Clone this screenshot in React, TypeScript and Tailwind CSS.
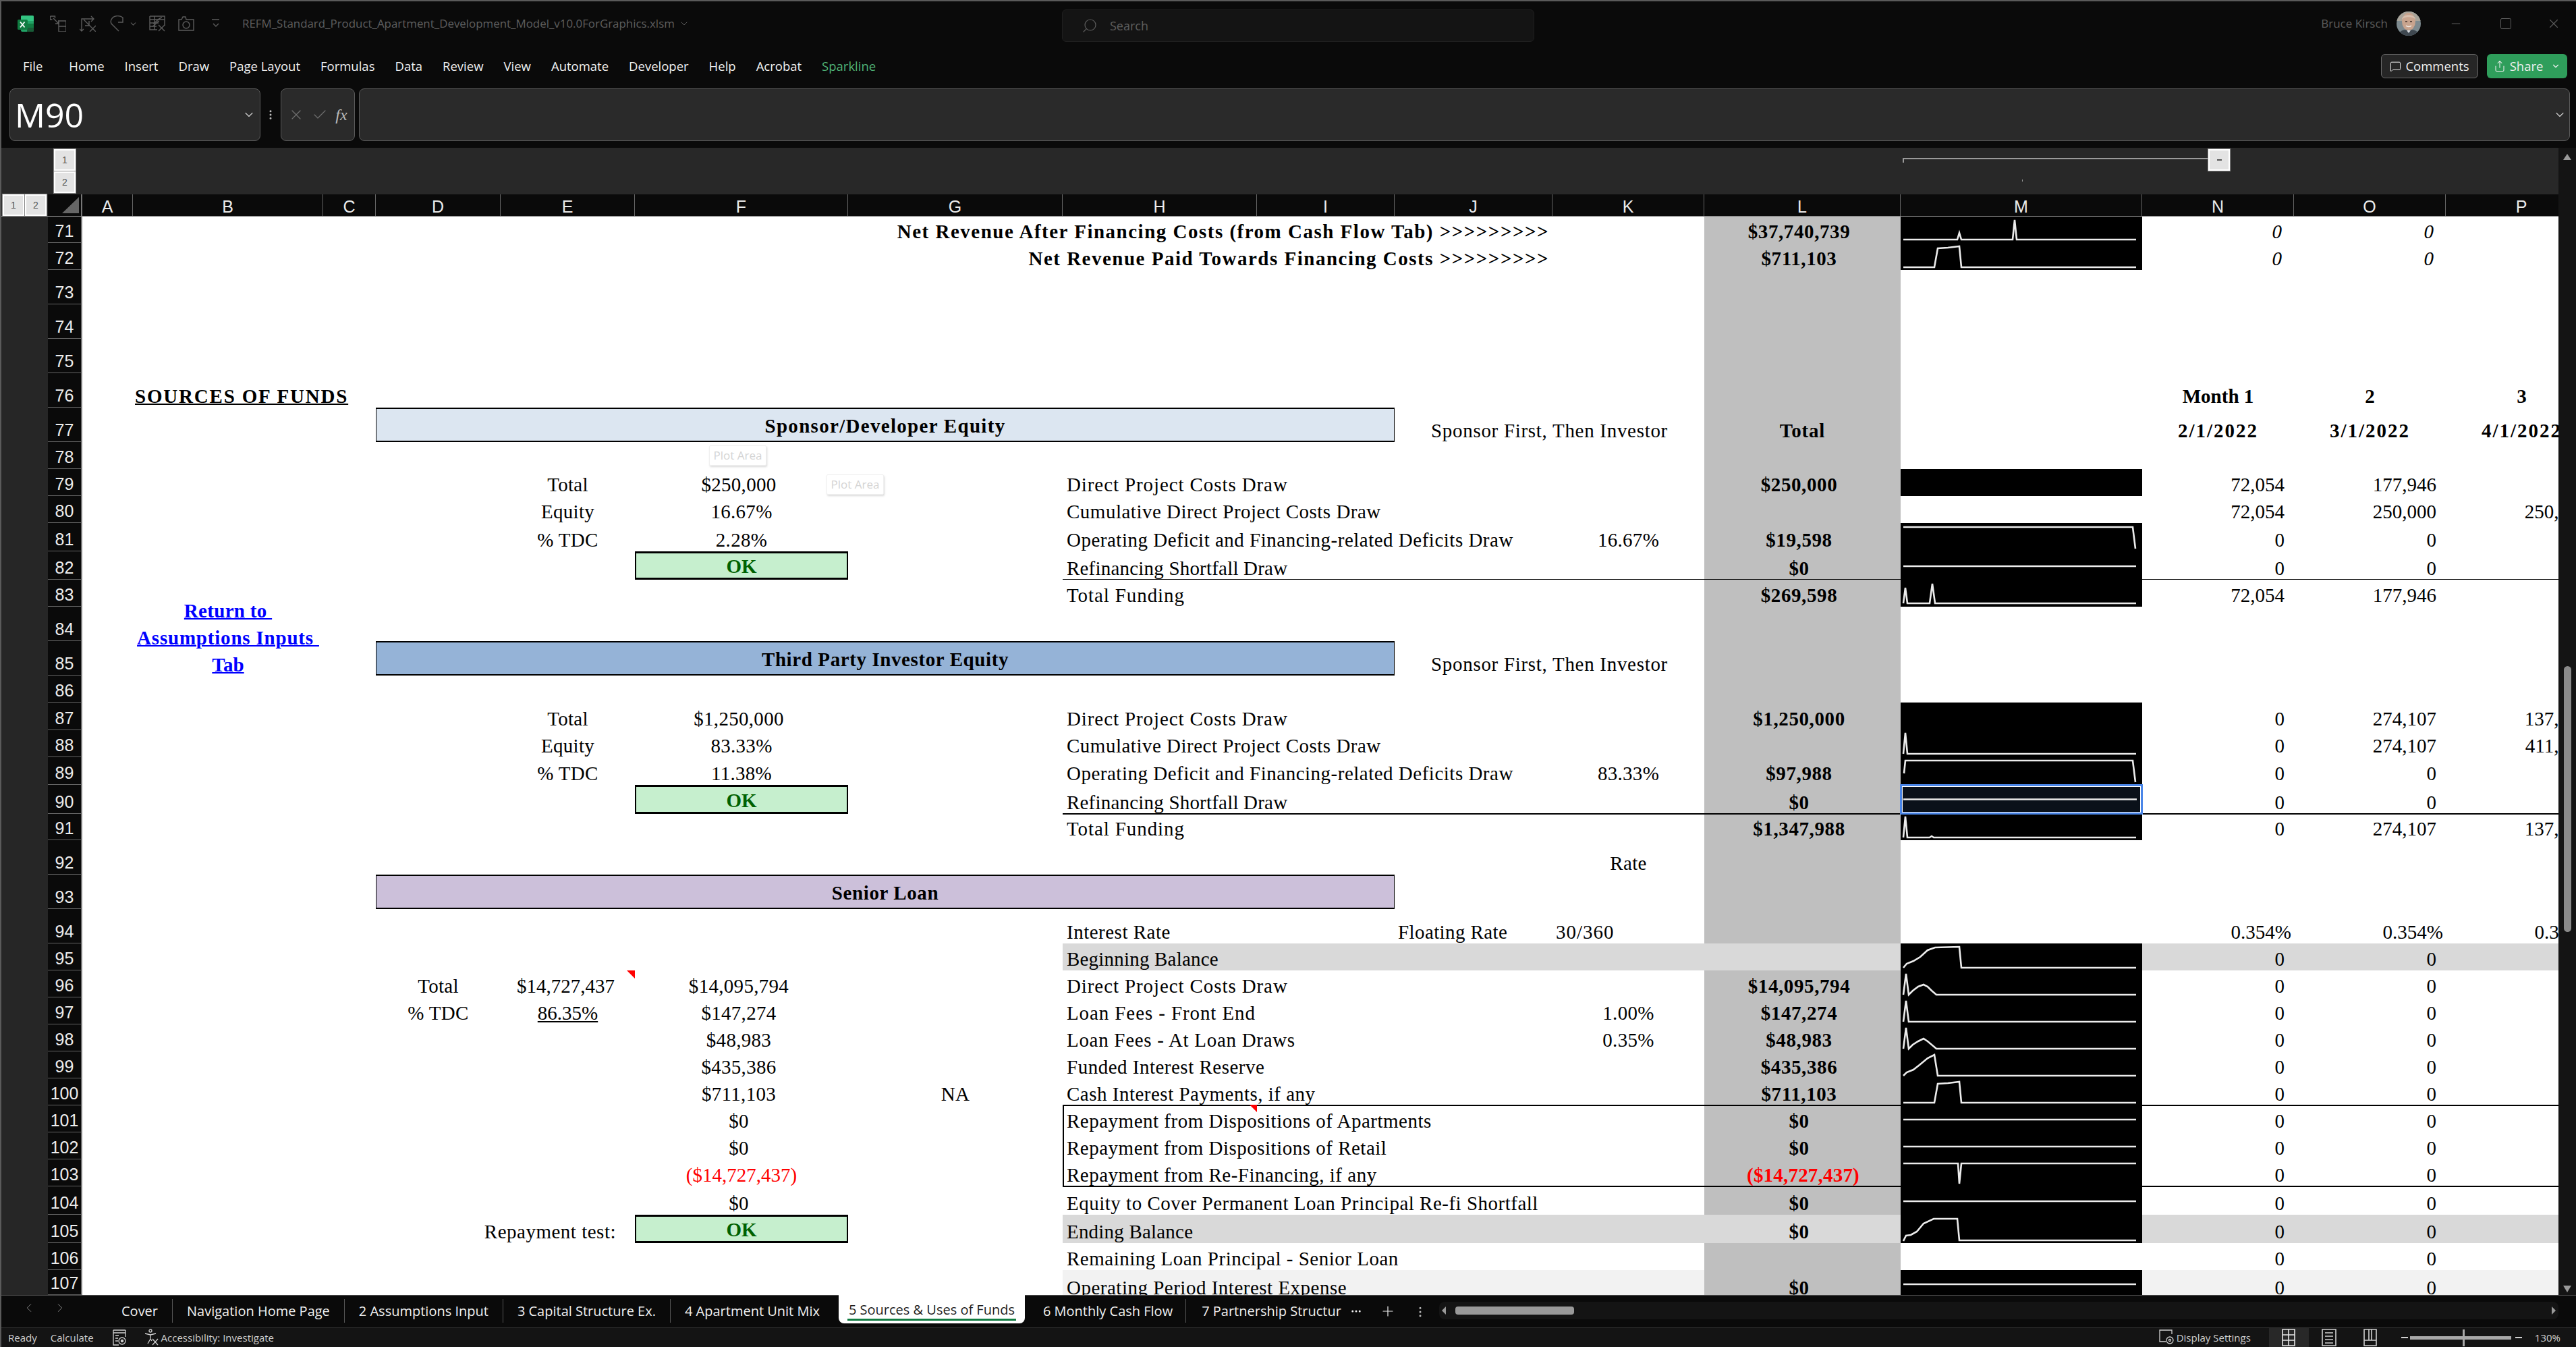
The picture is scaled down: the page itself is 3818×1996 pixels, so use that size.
import React from "react";
import { ChevronDown, ChevronLeft, ChevronRight, Check, X, Minus, Plus, Search, Square, MessageSquare, Share, MoreVertical, MoreHorizontal } from "lucide-react";

const GRID_COLS = "grid-cols-[75px_282px_78px_185px_199px_316px_318px_288px_204px_234px_225px_291px_358px_225px_225px_225px]";
const GRID_ROWS = "grid-rows-[39px_40px_51px_51px_51px_51px_51px_40px_40px_40px_42px_42px_40px_51px_51px_40px_41px_40px_41px_43px_39px_51px_51px_51px_40px_40px_40px_40px_40px_40px_40px_40px_40px_42px_42px_40px_37px]";

const rowHeights = [39, 40, 51, 51, 51, 51, 51, 40, 40, 40, 42, 42, 40, 51, 51, 40, 41, 40, 41, 43, 39, 51, 51, 51, 40, 40, 40, 40, 40, 40, 40, 40, 40, 42, 42, 40, 37];
const colNames = ["A", "B", "C", "D", "E", "F", "G", "H", "I", "J", "K", "L", "M", "N", "O", "P"];

const D = 4, E = 5, F = 6, G = 7, H = 8, J = 10, K = 11, L = 12, N = 14, O = 15, P = 16, B_ = 2;

const CTR = "justify-center tracking-[0.3px]";
const LFT = "justify-start pl-[6px] tracking-[0.5px]";
const LFW = "justify-start pl-[6px] tracking-[0.9px]";
const LFN = "justify-start pl-[6px] tracking-[0.2px]";
const NUM = "justify-end pr-[14px]";
const ITA = "justify-end pr-[18px] italic";
const CUR = "justify-center pr-[8px] tracking-[0.3px]";
const TOT = "justify-center pr-[10px] font-bold tracking-[0.6px]";
const REDT = "justify-center pl-[2px] font-bold tracking-[0.2px] text-[#ff0000]";
const NET = "justify-end pr-[5px] font-bold tracking-[1.5px]";
const DAT = "justify-center font-bold tracking-[2px]";
const SFI = "justify-start pl-[54px] tracking-[0.7px]";

type Cell = [number, number, string, string];

const threeNums = (n: number, a: string, b: string, c?: string): Cell[] => {
  const out: Cell[] = [[N, n, a, NUM], [O, n, b, NUM]];
  if (c) out.push([P, n, c, NUM]);
  return out;
};

const cells: Cell[] = [
  [J, 71, "Net Revenue After Financing Costs (from Cash Flow Tab) >>>>>>>>>", NET],
  [L, 71, "$37,740,739", TOT],
  [N, 71, "0", ITA],
  [O, 71, "0", ITA],
  [J, 72, "Net Revenue Paid Towards Financing Costs >>>>>>>>>", NET],
  [L, 72, "$711,103", TOT],
  [N, 72, "0", ITA],
  [O, 72, "0", ITA],
  [N, 76, "Month 1", "justify-center font-bold"],
  [O, 76, "2", "justify-center font-bold"],
  [P, 76, "3", "justify-center font-bold"],
  [J, 77, "Sponsor First, Then Investor", SFI],
  [L, 77, "Total", "justify-center font-bold tracking-[0.8px]"],
  [N, 77, "2/1/2022", DAT],
  [O, 77, "3/1/2022", DAT],
  [P, 77, "4/1/2022", DAT],

  [E, 79, "Total", CTR],
  [F, 79, "$250,000", CUR],
  [H, 79, "Direct Project Costs Draw", LFW],
  [L, 79, "$250,000", TOT],
  ...threeNums(79, "72,054", "177,946"),
  [E, 80, "Equity", CTR],
  [F, 80, "16.67%", CTR],
  [H, 80, "Cumulative Direct Project Costs Draw", LFT],
  ...threeNums(80, "72,054", "250,000", "250,000"),
  [E, 81, "% TDC", CTR],
  [F, 81, "2.28%", CTR],
  [H, 81, "Operating Deficit and Financing-related Deficits Draw", LFT],
  [K, 81, "16.67%", CTR],
  [L, 81, "$19,598", TOT],
  ...threeNums(81, "0", "0"),
  [H, 82, "Refinancing Shortfall Draw", LFN],
  [L, 82, "$0", TOT],
  ...threeNums(82, "0", "0"),
  [H, 83, "Total Funding", LFW],
  [L, 83, "$269,598", TOT],
  ...threeNums(83, "72,054", "177,946"),

  [J, 85, "Sponsor First, Then Investor", SFI],
  [E, 87, "Total", CTR],
  [F, 87, "$1,250,000", CUR],
  [H, 87, "Direct Project Costs Draw", LFW],
  [L, 87, "$1,250,000", TOT],
  ...threeNums(87, "0", "274,107", "137,054"),
  [E, 88, "Equity", CTR],
  [F, 88, "83.33%", CTR],
  [H, 88, "Cumulative Direct Project Costs Draw", LFT],
  ...threeNums(88, "0", "274,107", "411,161"),
  [E, 89, "% TDC", CTR],
  [F, 89, "11.38%", CTR],
  [H, 89, "Operating Deficit and Financing-related Deficits Draw", LFT],
  [K, 89, "83.33%", CTR],
  [L, 89, "$97,988", TOT],
  ...threeNums(89, "0", "0"),
  [H, 90, "Refinancing Shortfall Draw", LFN],
  [L, 90, "$0", TOT],
  ...threeNums(90, "0", "0"),
  [H, 91, "Total Funding", LFW],
  [L, 91, "$1,347,988", TOT],
  ...threeNums(91, "0", "274,107", "137,054"),

  [K, 92, "Rate", CTR],
  [H, 94, "Interest Rate", LFT],
  [J, 94, "Floating Rate", "justify-start pl-[5px] tracking-[0.4px]"],
  [K, 94, "30/360", "justify-start pl-[5px] tracking-[1px]"],
  [N, 94, "0.354%", "justify-end pr-[4px]"],
  [O, 94, "0.354%", "justify-end pr-[4px]"],
  [P, 94, "0.354%", "justify-end pr-[4px]"],
  [H, 95, "Beginning Balance", LFN],
  ...threeNums(95, "0", "0"),
  [D, 96, "Total", CTR],
  [E, 96, "$14,727,437", "justify-center pr-[6px]"],
  [F, 96, "$14,095,794", CUR],
  [H, 96, "Direct Project Costs Draw", LFW],
  [L, 96, "$14,095,794", TOT],
  ...threeNums(96, "0", "0"),
  [D, 97, "% TDC", CTR],
  [E, 97, "86.35%", "justify-center underline"],
  [F, 97, "$147,274", CUR],
  [H, 97, "Loan Fees - Front End", LFW],
  [K, 97, "1.00%", CTR],
  [L, 97, "$147,274", TOT],
  ...threeNums(97, "0", "0"),
  [F, 98, "$48,983", CUR],
  [H, 98, "Loan Fees - At Loan Draws", "justify-start pl-[6px] tracking-[0.7px]"],
  [K, 98, "0.35%", CTR],
  [L, 98, "$48,983", TOT],
  ...threeNums(98, "0", "0"),
  [F, 99, "$435,386", CUR],
  [H, 99, "Funded Interest Reserve", LFT],
  [L, 99, "$435,386", TOT],
  ...threeNums(99, "0", "0"),
  [F, 100, "$711,103", CUR],
  [G, 100, "NA", CTR],
  [H, 100, "Cash Interest Payments, if any", LFT],
  [L, 100, "$711,103", TOT],
  ...threeNums(100, "0", "0"),
  [F, 101, "$0", CUR],
  [H, 101, "Repayment from Dispositions of Apartments", LFT],
  [L, 101, "$0", TOT],
  ...threeNums(101, "0", "0"),
  [F, 102, "$0", CUR],
  [H, 102, "Repayment from Dispositions of Retail", LFT],
  [L, 102, "$0", TOT],
  ...threeNums(102, "0", "0"),
  [F, 103, "($14,727,437)", "justify-center text-[#ff0000]"],
  [H, 103, "Repayment from Re-Financing, if any", LFT],
  [L, 103, "($14,727,437)", REDT],
  ...threeNums(103, "0", "0"),
  [F, 104, "$0", CUR],
  [H, 104, "Equity to Cover Permanent Loan Principal Re-fi Shortfall", LFT],
  [L, 104, "$0", TOT],
  ...threeNums(104, "0", "0"),
  [E, 105, "Repayment test:", "justify-end pr-[28px] tracking-[0.5px]"],
  [H, 105, "Ending Balance", LFN],
  [L, 105, "$0", TOT],
  ...threeNums(105, "0", "0"),
  [H, 106, "Remaining Loan Principal - Senior Loan", LFT],
  ...threeNums(106, "0", "0"),
  [H, 107, "Operating Period Interest Expense", LFT],
  [L, 107, "$0", TOT],
  ...threeNums(107, "0", "0"),
];

const flat = (y: number) => `M4 ${y}L349 ${y}`;
const sparks: [number, string][] = [
  [71, "M4 34L84 34L87 24L90 34L166 34L169 5L172 34L349 34"],
  [72, "M4 36L50 36L55 8L70 7L87 5L90 36L349 36"],
  [79, ""],
  [81, "M4 6L344 6L348 38"],
  [82, flat(22)],
  [83, "M4 35L7 12L10 35L43 35L47 6L51 35L349 35"],
  [87, ""],
  [88, "M4 35L7 4L10 35L349 35"],
  [89, "M5 24L7 5L344 5L348 37"],
  [91, "M4 35L7 4L10 35L43 35L46 33L49 35L349 35"],
  [95, "M4 36L9 30L19 26L29 20L40 10L51 6L87 5L90 36L349 36"],
  [96, "M4 36L8 5L12 36L18 30L26 24L34 21L40 24L46 30L53 36L349 36"],
  [97, "M4 36L8 5L12 36L349 36"],
  [98, "M4 36L8 5L12 36L18 30L26 25L34 21L40 25L53 36L349 36"],
  [99, "M4 36L9 31L19 27L28 20L40 10L50 5L55 36L349 36"],
  [100, "M4 36L50 36L55 8L70 7L87 5L90 36L349 36"],
  [101, flat(21)],
  [102, flat(21)],
  [103, "M4 6L85 6L87 36L90 6L349 6"],
  [104, flat(22)],
  [105, "M4 39L8 31L15 30L24 25L34 13L49 6L84 6L87 38L349 38"],
  [107, flat(21)],
];

const at = (col: number, row: number, cs = 1, rs = 1): React.CSSProperties => ({
  gridColumn: `${col} / span ${cs}`,
  gridRow: `${row - 70} / span ${rs}`,
});

function Spark({ d, h }: { d: string; h: number }) {
  return (
    <svg className="block w-full h-full" viewBox={`0 0 358 ${h}`} preserveAspectRatio="none">
      {d && <path d={d} fill="none" stroke="#ececec" strokeWidth="2.6" />}
    </svg>
  );
}

function Banner({ row, label, className }: { row: number; label: string; className: string }) {
  return (
    <div style={at(D, row, 6)} className={`flex items-center justify-center pt-[2px] border-y-2 border-x border-black font-bold z-10 ${className}`}>
      {label}
    </div>
  );
}

function OkBox({ row }: { row: number }) {
  return (
    <div style={at(F, row)} className="flex items-center justify-center pt-[2px] border-2 border-b-[3px] border-t-[3px] border-black bg-[#c6efce] text-[#006100] font-bold z-10">
      OK
    </div>
  );
}

function PlotArea({ className }: { className: string }) {
  return (
    <div className={`absolute w-[85px] h-[30px] flex items-center justify-center bg-white border border-[#f0f0f0] shadow-[1px_2px_3px_rgba(0,0,0,0.15)] rounded-[2px] text-[17px] text-[#d4d4d4] font-['Open_Sans',sans-serif] z-20 ${className}`}>
      Plot Area
    </div>
  );
}

function HLine({ row, className }: { row: number; className: string }) {
  return <div style={at(H, row, 9)} className={`self-start -mt-[1px] bg-black z-10 ${className}`} />;
}

function SheetGrid() {
  return (
    <div className={`relative flex-1 grid ${GRID_COLS} ${GRID_ROWS} bg-white overflow-hidden text-black font-['Liberation_Serif',serif] text-[29px] leading-[34px]`}>
      <div style={at(L, 71, 1, 37)} className="bg-[#bfbfbf]" />
      <div style={at(H, 95, 9)} className="bg-[#d9d9d9]" />
      <div style={at(H, 105, 9)} className="bg-[#d9d9d9]" />
      <div style={at(H, 107, 4)} className="bg-[#f2f2f2]" />
      <div style={at(N, 107, 3)} className="bg-[#f2f2f2]" />

      {sparks.map(([row, d]) => (
        <div key={row} style={at(13, row)} className="bg-black">
          <Spark d={d} h={rowHeights[row - 71]} />
        </div>
      ))}

      <HLine row={83} className="h-[1px]" />
      <HLine row={91} className="h-[2px]" />
      <HLine row={101} className="h-[2px]" />
      <HLine row={104} className="h-[2px]" />
      <div style={at(H, 101, 1, 3)} className="relative border-l-2 border-black -mt-[1px] z-10">
        <div className="absolute right-0 top-0 w-[11px] h-[11px] bg-[#ff0000] [clip-path:polygon(0_0,100%_0,100%_100%)]" />
      </div>

      <Banner row={77} label="Sponsor/Developer Equity" className="bg-[#dce6f1] tracking-[1.3px]" />
      <Banner row={85} label="Third Party Investor Equity" className="bg-[#95b3d7] tracking-[0.6px]" />
      <Banner row={93} label="Senior Loan" className="bg-[#ccc0da] tracking-[0.6px]" />
      <OkBox row={82} />
      <OkBox row={90} />
      <OkBox row={105} />

      <div style={at(B_, 76)} className="flex items-end whitespace-nowrap pl-[3px] font-bold tracking-[1.8px] underline decoration-2 z-10">SOURCES OF FUNDS</div>
      <div style={at(B_, 83, 1, 4)} className="flex flex-col items-center justify-end pb-[36px] leading-[40px] font-bold underline decoration-2 text-[#0000ff] whitespace-pre z-10">
        <span className="tracking-[0.3px]">Return to </span>
        <span className="tracking-[0.8px]">Assumptions Inputs </span>
        <span>Tab</span>
      </div>

      {cells.map(([c, r, t, cls], i) => (
        <div key={i} style={at(c, r)} className={`relative flex items-end whitespace-nowrap min-w-0 z-10 ${r === 107 ? "-mb-[6px]" : ""} ${cls}`}>
          <span>{t}</span>
        </div>
      ))}

      <div style={at(E, 96)} className="relative z-10">
        <div className="absolute right-0 top-0 w-[12px] h-[12px] bg-[#ff0000] [clip-path:polygon(0_0,100%_0,100%_100%)]" />
      </div>

      <div style={at(13, 90)} className="-m-[1px] border-[3px] border-[#4a86e8] z-20 bg-[#0a111a]">
        <div className="w-full h-full border border-white">
          <svg className="block w-full h-full" viewBox="0 0 350 36" preserveAspectRatio="none">
            <path d="M1 18L345 18" fill="none" stroke="#ececec" strokeWidth="2.6" />
          </svg>
        </div>
      </div>

      <PlotArea className="left-[929px] top-[339px]" />
      <PlotArea className="left-[1103px] top-[382px]" />
    </div>
  );
}

function OutlineBtn({ n }: { n: number }) {
  return (
    <div className="w-[32px] h-[32px] flex items-center justify-center bg-[#e3e3e3] border-2 border-white outline outline-1 outline-[#888] text-[#555] text-[14px] font-['Liberation_Sans',sans-serif]">
      {n}
    </div>
  );
}

function ExcelLogo() {
  return (
    <svg width="24" height="24" viewBox="0 0 24 24">
      <rect x="5" y="0" width="19" height="24" rx="2" fill="#21a366" />
      <path d="M7 0h15a2 2 0 0 1 2 2v6H5V2a2 2 0 0 1 2-2z" fill="#33c481" />
      <rect x="14" y="12" width="10" height="6" fill="#107c41" />
      <path d="M14 18h10v4a2 2 0 0 1-2 2H14z" fill="#185c37" />
      <rect x="0" y="6" width="15" height="15" rx="1.5" fill="#107c41" />
      <path d="M4 9.5l6.5 8M10.5 9.5l-6.5 8" stroke="#fff" strokeWidth="1.8" />
    </svg>
  );
}

function QatIcon({ children, w = 24 }: { children: React.ReactNode; w?: number }) {
  return (
    <svg width={w} height="24" viewBox={`0 0 ${w} 24`} fill="none" stroke="#5c5c5c" strokeWidth="1.4" className="shrink-0">
      {children}
    </svg>
  );
}

function TitleBar() {
  return (
    <div className="h-[66px] shrink-0 flex items-center relative">
      <div className="ml-[26px] shrink-0"><ExcelLogo /></div>
      <div className="ml-[24px]">
        <QatIcon>
          <path d="M.5 1h7v3M.5 1v5h3M5 4l8 8M13 7v5H8" />
          <path d="M13 8h11v16H13zM13 16h11" />
        </QatIcon>
      </div>
      <div className="ml-[20px]">
        <QatIcon>
          <path d="M0 20l3 3 3-3M3 23V5h18M17 1l4 4-4 4" />
          <path d="M6 6l9 9M14 8v7H8M15 15l9 9M24 15l-9 9" />
        </QatIcon>
      </div>
      <div className="ml-[20px]">
        <QatIcon w={22}>
          <path d="M14 23L3 12a7 7 0 0 1 0-6C6 0 14-1 20 3v7h-7" />
        </QatIcon>
      </div>
      <ChevronDown className="ml-[7px] w-[13px] h-[13px] text-[#5c5c5c]" strokeWidth={2} />
      <div className="ml-[17px]">
        <QatIcon>
          <path d="M1 1h22v14M1 1v20h11M1 6h22M1 11h13M1 16h10M8 1v20" />
          <path d="M5 16c6-3 5-6 10-8M6 12c5-2 7-8 13-9M14 14l9 9M23 14l-9 9" />
        </QatIcon>
      </div>
      <div className="ml-[19px]">
        <QatIcon>
          <path d="M1 6h4l2-4h4l1 4h11v16H1z" />
          <circle cx="12" cy="14" r="5" />
        </QatIcon>
      </div>
      <div className="ml-[26px]">
        <QatIcon w={12}>
          <path d="M0 6h11M2 12l4 4 4-4" />
        </QatIcon>
      </div>
      <div className="ml-[33px] flex items-center text-[#5e5e5e] text-[16.9px] whitespace-nowrap">
        REFM_Standard_Product_Apartment_Development_Model_v10.0ForGraphics.xlsm
        <ChevronDown className="ml-[6px] w-[16px] h-[16px]" strokeWidth={1.5} />
      </div>
      <div className="absolute left-[1574px] top-[12px] w-[700px] h-[48px] flex items-center bg-[#141414] border border-[#1f1f1f] rounded-[6px] text-[#5e5e5e] text-[18px]">
        <Search className="ml-[28px] w-[24px] h-[24px] -scale-x-100" strokeWidth={1.2} />
        <span className="ml-[18px]">Search</span>
      </div>
      <div className="absolute right-0 top-0 h-full flex items-center text-[#5c5c5c]">
        <span className="text-[17px] mr-[13px] whitespace-nowrap">Bruce Kirsch</span>
        <svg width="36" height="36" viewBox="0 0 36 36" className="shrink-0">
          <clipPath id="av"><circle cx="18" cy="18" r="18" /></clipPath>
          <g clipPath="url(#av)">
            <rect width="36" height="36" fill="#7d8a8f" />
            <rect width="36" height="14" fill="#a8a49a" />
            <ellipse cx="18" cy="15" rx="10" ry="13" fill="#c8a48e" />
            <path d="M8 12c0-9 20-9 20 0c-3-5-17-5-20 0z" fill="#d7bfae" />
            <path d="M13 15h3M20 15h3" stroke="#3e2e28" strokeWidth="1.4" />
            <path d="M14 21c2 2 6 2 8 0" stroke="#f4eee8" strokeWidth="1.6" fill="none" />
            <path d="M3 36c1-8 8-10 15-8c7-2 14 0 15 8z" fill="#3f4850" />
            <path d="M15 28l3 4 3-4z" fill="#d8dde2" />
          </g>
        </svg>
        <Minus className="ml-[42px] w-[20px] h-[20px]" strokeWidth={1.2} />
        <Square className="ml-[54px] w-[20px] h-[20px]" strokeWidth={1.2} />
        <X className="ml-[50px] mr-[22px] w-[22px] h-[22px]" strokeWidth={1.2} />
      </div>
    </div>
  );
}

const menuItems = ["Home", "Insert", "Draw", "Page Layout", "Formulas", "Data", "Review", "View", "Automate", "Developer", "Help", "Acrobat"];

function MenuBar() {
  return (
    <div className="h-[60px] shrink-0 flex items-center text-[18.5px] text-[#f0f0f0] whitespace-nowrap">
      <span className="ml-[34px] mr-[39px]">File</span>
      <div className="flex items-center gap-[30px]">
        {menuItems.map((m) => (
          <span key={m}>{m}</span>
        ))}
        <span className="text-[#4fb377]">Sparkline</span>
      </div>
      <div className="ml-auto mr-[13px] flex items-center gap-[13px] text-[#f0f0f0]">
        <div className="w-[144px] h-[36px] flex items-center justify-center gap-[6px] bg-[#262626] border border-[#6a6a6a] rounded-[6px]">
          <MessageSquare className="w-[17px] h-[17px]" strokeWidth={1.4} />
          <span>Comments</span>
        </div>
        <div className="w-[119px] h-[36px] flex items-center justify-center gap-[6px] bg-[#2f9e5b] rounded-[6px]">
          <Share className="w-[18px] h-[18px]" strokeWidth={1.4} />
          <span>Share</span>
          <ChevronDown className="ml-[6px] w-[14px] h-[14px]" strokeWidth={2} />
        </div>
      </div>
    </div>
  );
}

function FormulaBar() {
  return (
    <div className="h-[91px] shrink-0 pt-[3px] pb-[10px] flex">
      <div className="ml-[14px] w-[372px] flex items-center bg-[#2a2a2a] border border-[#5a5a5a] rounded-[8px] text-white text-[50px] pl-[7px]">
        <span>M90</span>
        <ChevronDown className="ml-auto mr-[6px] w-[20px] h-[20px] text-[#cfcfcf]" strokeWidth={1.4} />
      </div>
      <MoreVertical className="self-center mx-[6px] w-[18px] h-[24px] text-[#bdbdbd]" strokeWidth={2} />
      <div className="w-[110px] flex items-center justify-center gap-[11px] bg-[#2a2a2a] border border-[#5a5a5a] rounded-[8px] text-[#6f6f6f]">
        <X className="w-[24px] h-[26px]" strokeWidth={1.2} />
        <Check className="w-[24px] h-[26px]" strokeWidth={1.2} />
        <span className="text-[#bcbcbc] italic text-[24px] font-['Liberation_Serif',serif]">fx</span>
      </div>
      <div className="ml-[6px] mr-[9px] flex-1 flex items-center justify-end bg-[#2a2a2a] border border-[#5a5a5a] rounded-[8px]">
        <ChevronDown className="mr-[4px] w-[20px] h-[20px] text-[#cfcfcf]" strokeWidth={1.4} />
      </div>
    </div>
  );
}

function OutlineToolbar() {
  return (
    <div className="h-[69px] shrink-0 bg-[#282828] flex">
      <div className="ml-[80px] mt-[2px] flex flex-col gap-[1px]">
        <OutlineBtn n={1} />
        <OutlineBtn n={2} />
      </div>
      <div className="ml-[2708px] relative w-[453px] h-full">
        <div className="mt-[15px] h-[2px] bg-[#9a9a9a]" />
        <div className="w-[2px] h-[5px] bg-[#9a9a9a]" />
        <div className="absolute left-[177px] top-[47px] w-[1px] h-[3px] bg-[#9a9a9a]" />
      </div>
      <div className="mt-[2px] w-[32px] h-[32px] flex items-center justify-center bg-[#e3e3e3] border-2 border-white outline outline-1 outline-[#888]">
        <div className="w-[7px] h-[2px] bg-[#555]" />
      </div>
    </div>
  );
}

function ColumnHeader() {
  return (
    <div className="h-[33px] shrink-0 flex border-b-[1.5px] border-[#888] text-[#ececec] text-[25px] font-['Liberation_Sans',sans-serif]">
      <div className="w-[71px] shrink-0 bg-[#282828] flex gap-[1px] pl-[4px]">
        <OutlineBtn n={1} />
        <OutlineBtn n={2} />
      </div>
      <div className="w-[51px] shrink-0 bg-[#0a0a0a] relative border-r-2 border-[#777]">
        <div className="absolute right-[3px] top-[4px] w-[25px] h-[24px] bg-[#666] [clip-path:polygon(100%_0,100%_100%,0_100%)]" />
      </div>
      <div className={`flex-1 grid ${GRID_COLS} bg-[#0a0a0a] overflow-hidden`}>
        {colNames.map((c) => (
          <div key={c} className="flex items-center justify-center border-r border-[#666]">{c}</div>
        ))}
      </div>
    </div>
  );
}

function RowHeaders() {
  return (
    <div className="w-[51px] shrink-0 flex flex-col bg-[#0a0a0a] border-r-2 border-[#777] text-[#ececec] text-[25px] font-['Liberation_Sans',sans-serif]">
      {rowHeights.map((h, i) => (
        <div key={i} style={{ height: h }} className="flex items-end justify-center pb-[2px] leading-[30px] border-b border-[#666]">
          {i + 71}
        </div>
      ))}
    </div>
  );
}

function VScroll() {
  return (
    <div className="w-[26px] shrink-0 bg-[#141414] flex flex-col items-center">
      <div className="mt-[9px] w-[12px] h-[9px] bg-[#999] [clip-path:polygon(50%_0,100%_100%,0_100%)]" />
      <div className="mt-[750px] w-[11px] h-[394px] bg-[#8a8a8a] rounded-full" />
      <div className="mt-auto mb-[4px] w-[12px] h-[10px] bg-[#999] [clip-path:polygon(0_0,100%_0,50%_100%)]" />
    </div>
  );
}

const tabs = ["Cover", "Navigation Home Page", "2 Assumptions Input", "3 Capital Structure Ex.", "4 Apartment Unit Mix"];

function SheetTabs() {
  return (
    <div className="h-[48px] shrink-0 flex items-start border-t border-[#444] text-[20px] text-[#f0f0f0] whitespace-nowrap">
      <div className="w-[180px] shrink-0 h-[36px] flex items-center pl-[32px] gap-[24px] text-[#8a8a8a]">
        <ChevronLeft className="w-[22px] h-[24px]" strokeWidth={1} />
        <ChevronRight className="w-[22px] h-[24px]" strokeWidth={1} />
      </div>
      {tabs.map((t, i) => (
        <div key={t} className={`h-[35px] mt-[5px] flex items-center ${i === 0 ? "pr-[21px]" : "px-[21px]"} ${i < tabs.length - 1 ? "border-r border-[#555]" : ""}`}>
          {t}
        </div>
      ))}
      <div className="ml-[7px] w-[276px] h-[42px] -mt-[1px] flex flex-col items-center justify-center bg-white rounded-b-[8px] text-[#1f1f1f]">
        <span className="leading-[26px] mt-[4px]">5 Sources &amp; Uses of Funds</span>
        <div className="w-[250px] h-[3px] bg-[#107c41]" />
      </div>
      <div className="h-[35px] mt-[5px] flex items-center pl-[27px] pr-[19px] border-r border-[#555]">6 Monthly Cash Flow</div>
      <div className="h-[35px] mt-[5px] flex items-center pl-[23px]">7 Partnership Structur</div>
      <MoreHorizontal className="ml-[13px] mt-[14px] w-[18px] h-[18px]" strokeWidth={2} />
      <Plus className="ml-[26px] mt-[11px] w-[24px] h-[24px]" strokeWidth={1.2} />
      <MoreVertical className="ml-[26px] mt-[12px] w-[20px] h-[24px] text-[#bdbdbd]" strokeWidth={1.6} />
      <div className="ml-[18px] mr-[26px] mt-[9px] flex-1 h-[26px] flex items-center bg-[#141414] rounded-[8px] px-[4px]">
        <div className="w-0 h-0 border-y-[6px] border-y-transparent border-r-[6px] border-r-[#999]" />
        <div className="ml-[14px] w-[176px] h-[12px] rounded-[4px] bg-[#999]" />
        <div className="ml-auto w-0 h-0 border-y-[6px] border-y-transparent border-l-[6px] border-l-[#999]" />
      </div>
    </div>
  );
}

function StatusBar() {
  return (
    <div className="h-[29px] shrink-0 flex items-center bg-[#141414] border-t border-[#333] text-[15px] text-[#d0d0d0] whitespace-nowrap">
      <span className="ml-[12px]">Ready</span>
      <span className="ml-[20px]">Calculate</span>
      <svg width="22" height="24" viewBox="0 0 22 24" fill="none" stroke="#d0d0d0" strokeWidth="1.3" className="ml-[27px]">
        <path d="M2 1h18M2 5h18M2 1v22h8M20 1v10M5 9h5M5 13h4M5 17h4" />
        <circle cx="15" cy="17" r="5" />
        <circle cx="15" cy="17" r="1.6" fill="#d0d0d0" />
      </svg>
      <svg width="22" height="26" viewBox="0 0 22 26" fill="none" stroke="#d0d0d0" strokeWidth="1.3" className="ml-[26px]">
        <circle cx="9" cy="3" r="2" />
        <path d="M1 7l8 2 8-2M9 9v6M9 15l-4 7M9 15l2 3M12 15l8 9M20 15l-8 9" />
      </svg>
      <span className="ml-[3px]">Accessibility: Investigate</span>
      <svg width="24" height="26" viewBox="0 0 24 26" fill="none" stroke="#d0d0d0" strokeWidth="1.3" className="ml-auto">
        <path d="M10 19H1V2h18v6" />
        <circle cx="16" cy="17" r="5" />
        <circle cx="16" cy="17" r="1.5" />
      </svg>
      <span className="ml-[2px]">Display Settings</span>
      <div className="ml-[27px] w-[59px] h-full flex items-center justify-center bg-[#282828]">
        <svg width="20" height="26" viewBox="0 0 20 26" fill="none" stroke="#e6e6e6" strokeWidth="1.6">
          <path d="M1 1h18v24H1zM1 9h18M1 17h18M10 1v24" />
        </svg>
      </div>
      <svg width="22" height="26" viewBox="0 0 22 26" fill="none" stroke="#d0d0d0" strokeWidth="1.6" className="ml-[19px]">
        <path d="M1 1h20v24H1zM5 6h12M5 11h12M5 16h12M5 21h12" />
      </svg>
      <svg width="20" height="26" viewBox="0 0 20 26" fill="none" stroke="#d0d0d0" strokeWidth="1.6" className="ml-[40px]">
        <path d="M1 1h18v24H1zM1 17h18M8 1v16M12 1v16" />
      </svg>
      <span className="ml-[36px] w-[10px] h-[2px] bg-[#d0d0d0]" />
      <div className="ml-[3px] relative w-[150px] h-[5px] bg-[#a8a8a8]">
        <div className="absolute left-[78px] -top-[10px] w-[3px] h-[25px] bg-[#a8a8a8]" />
      </div>
      <span className="ml-[6px] w-[10px] h-[2px] bg-[#d0d0d0]" />
      <span className="ml-[19px] mr-[23px]">130%</span>
    </div>
  );
}

export default function App() {
  return (
    <div className="relative w-[3818px] h-[1996px] flex flex-col bg-[#0a0a0a] overflow-hidden font-['Open_Sans',sans-serif] border-t-2 border-[#5a5a5a]">
      <div className="absolute left-0 top-0 bottom-0 w-[2px] bg-[#5a5a5a] z-30" />
      <TitleBar />
      <MenuBar />
      <FormulaBar />
      <div className="flex-1 flex min-h-0">
        <div className="flex-1 min-w-0 flex flex-col">
          <OutlineToolbar />
          <ColumnHeader />
          <div className="flex-1 flex min-h-0">
            <div className="w-[71px] shrink-0 bg-[#262626]" />
            <RowHeaders />
            <SheetGrid />
          </div>
        </div>
        <VScroll />
      </div>
      <SheetTabs />
      <StatusBar />
    </div>
  );
}
